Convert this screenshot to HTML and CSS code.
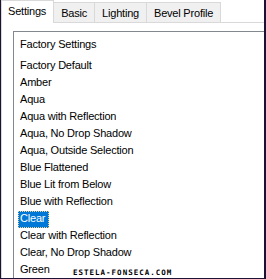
FILE: index.html
```html
<!DOCTYPE html>
<html lang="en">
<head>
    <meta charset="UTF-8">
    <title>Bevel Presets</title>
    <link rel="stylesheet" href="styles.css">
</head>
<body>

<div class="window">

    <!-- Tab strip -->
    <div class="tabs">
        <div class="tab active">Settings</div>
        <div class="tab">Basic</div>
        <div class="tab">Lighting</div>
        <div class="tab">Bevel Profile</div>
    </div>

    <!-- Settings page -->
    <div class="panel">
        <div class="listbox">
            <div class="group">Factory Settings</div>
            <ul class="presets">
                <li>Factory Default</li>
                <li>Amber</li>
                <li>Aqua</li>
                <li>Aqua with Reflection</li>
                <li>Aqua, No Drop Shadow</li>
                <li>Aqua, Outside Selection</li>
                <li>Blue Flattened</li>
                <li>Blue Lit from Below</li>
                <li>Blue with Reflection</li>
                <li class="selected">Clear</li>
                <li>Clear with Reflection</li>
                <li>Clear, No Drop Shadow</li>
                <li>Green</li>
            </ul>
        </div>
    </div>

    <div class="watermark">ESTELA-FONSECA.COM</div>

</div>

</body>
</html>
```

FILE: styles.css
```css
body {
    margin: 0;
    font-family: "Liberation Sans", Arial, sans-serif;
    font-size: 11px;
    letter-spacing: -0.2px;
    color: #000;
    background: #fff;
}
.window {
    position: relative;
    width: 266px;
    height: 279px;
    box-sizing: border-box;
    border-left: 1px solid #1d1233;
    border-right: 2px solid #1d1233;
    border-bottom: 1px solid #1d1233;
    overflow: hidden;
    background: #fff;
}
.tabs {
    display: flex;
    align-items: flex-end;
    height: 22px;
}
.tab {
    height: 20px;
    box-sizing: border-box;
    padding: 3px 7px 0;
    line-height: 15px;
    white-space: nowrap;
    border: 1px solid #d9d9d9;
    border-bottom: none;
    background: #f0f0f0;
    margin-left: -1px;
}
.tab.active {
    height: 23px;
    padding: 3px 7px 0 6px;
    margin-left: 0;
    margin-bottom: -1px;
    background: #fff;
    position: relative;
    z-index: 1;
}
.panel {
    border-top: 1px solid #d9d9d9;
    border-left: 1px solid #d9d9d9;
    padding: 8px 0 0 11px;
}
.listbox {
    width: 300px;
    height: 300px;
    border: 1px solid #828790;
    padding: 5px 0 0 4px;
}
.group {
    line-height: 15px;
    padding-left: 2px;
    margin-bottom: 6px;
}
.presets {
    list-style: none;
    margin: 0;
    padding: 0;
}
.presets li {
    width: fit-content;
    line-height: 15px;
    padding: 0 4px 2px 2px;
    white-space: nowrap;
}
.presets li.selected {
    background: #0078d7;
    color: #fff;
    outline: 1px dotted #f5d28a;
    outline-offset: -1px;
}
.watermark {
    position: absolute;
    left: 72px;
    top: 269px;
    font-family: "DejaVu Sans Mono", monospace;
    font-weight: bold;
    font-size: 7.5px;
    line-height: 8px;
    letter-spacing: 1px;
}
```
